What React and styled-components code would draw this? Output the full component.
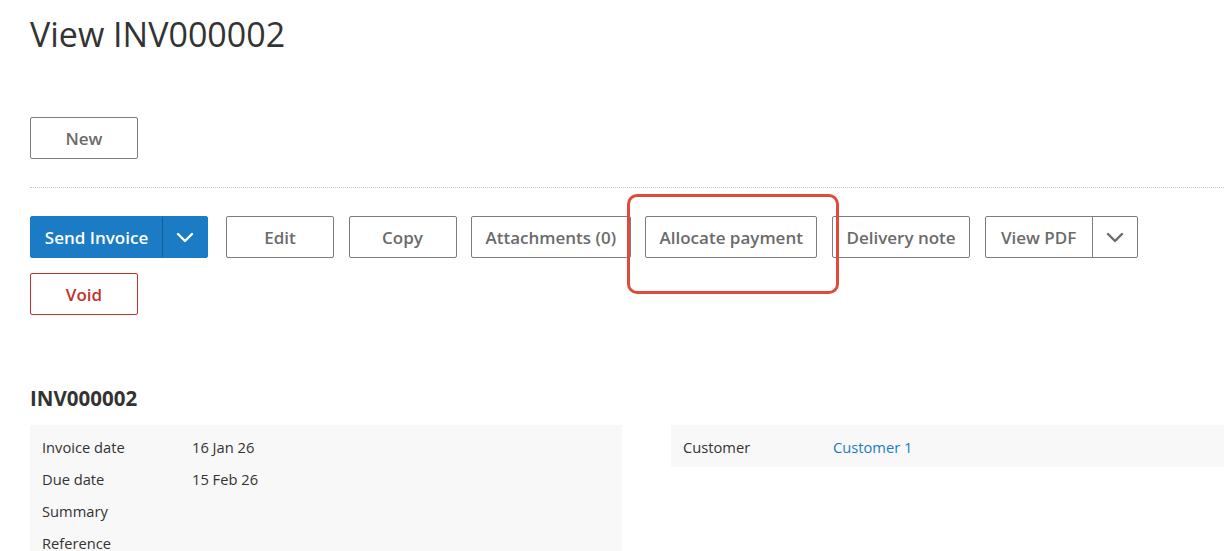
import React from "react";
import styled, { createGlobalStyle } from "styled-components";

const GlobalStyle = createGlobalStyle`
  html, body {
    margin: 0;
    padding: 0;
    background: #fff;
    overflow: hidden;
  }
  body {
    font-family: "Open Sans", "Liberation Sans", sans-serif;
    color: #333;
  }
`;

const Page = styled.div`
  position: relative;
  width: 1260px;
  padding: 14px 0 0 30px;
`;

const Title = styled.h1`
  margin: 0;
  font-size: 34px;
  line-height: 41px;
  font-weight: 400;
  color: #333;
`;

const TopBar = styled.div`
  margin-top: 62px;
  padding-bottom: 28px;
  border-bottom: 1px dotted #c8c8c8;
`;

const Actions = styled.div`
  display: flex;
  flex-wrap: wrap;
  row-gap: 15px;
  column-gap: 14.5px;
  padding-top: 28px;
  width: 1120px;
`;

const Button = styled.button`
  box-sizing: border-box;
  height: 42px;
  min-width: 108px;
  padding: 0 13.5px;
  font-family: "Open Sans", "Liberation Sans", sans-serif;
  font-size: 17px;
  font-weight: 600;
  color: ${(p) => (p.$danger ? "#c4312c" : "#6b6b6b")};
  background: #fff;
  border: 1px solid ${(p) => (p.$danger ? "#c4312c" : "#7d7d7d")};
  border-radius: 2px;
  cursor: pointer;
`;

const Split = styled.div`
  display: flex;
  height: 42px;
  margin-right: ${(p) => (p.$extra ? "3.5px" : "0")};
  border-radius: 2px;
  border: 1px solid ${(p) => (p.$primary ? "#1b7bc4" : "#7d7d7d")};
  background: ${(p) => (p.$primary ? "#1b7bc4" : "#fff")};
  box-sizing: border-box;
`;

const SplitMain = styled.button`
  height: 100%;
  width: ${(p) => p.$w}px;
  padding: 0;
  font-family: "Open Sans", "Liberation Sans", sans-serif;
  font-size: 17px;
  font-weight: 600;
  color: ${(p) => (p.$primary ? "#fff" : "#6b6b6b")};
  background: transparent;
  border: none;
  border-right: 1px solid ${(p) => (p.$primary ? "#175f99" : "#7d7d7d")};
  cursor: pointer;
`;

const SplitToggle = styled.button`
  height: 100%;
  width: 44px;
  padding: 0;
  display: flex;
  align-items: center;
  justify-content: center;
  background: transparent;
  border: none;
  color: ${(p) => (p.$primary ? "#fff" : "#6b6b6b")};
  cursor: pointer;
`;

const Highlight = styled.div`
  position: absolute;
  left: 627px;
  top: 194px;
  width: 212px;
  height: 100px;
  box-sizing: border-box;
  border: 3px solid #e04a3a;
  border-radius: 10px;
  pointer-events: none;
`;

const Heading = styled.h2`
  margin: 68px 0 0;
  font-size: 20.5px;
  line-height: 30px;
  font-weight: 700;
  color: #333;
`;

const Columns = styled.div`
  display: grid;
  grid-template-columns: 592px 592px;
  column-gap: 49px;
  align-items: start;
  margin-top: 12px;
`;

const Panel = styled.div`
  background: #f8f8f8;
  padding: 6px 12px 4px;
  min-height: ${(p) => p.$minH || 0}px;
`;

const Row = styled.div`
  display: grid;
  grid-template-columns: 150px 1fr;
  height: 32px;
  align-items: center;
  font-size: 14.7px;
  color: #333;
`;

const Link = styled.a`
  color: #1b7bc4;
  text-decoration: none;
`;

const Chevron = () => (
  <svg width="18" height="11" viewBox="0 0 18 11" fill="none">
    <polyline
      points="2,2 9,9 16,2"
      stroke="currentColor"
      strokeWidth="2.4"
      strokeLinecap="round"
      strokeLinejoin="round"
    />
  </svg>
);

export default function App() {
  return (
    <>
      <GlobalStyle />
      <Page>
        <Title>View INV000002</Title>
        <TopBar>
          <Button>New</Button>
        </TopBar>
        <Actions>
          <Split $primary $extra>
            <SplitMain $primary $w={132}>
              Send Invoice
            </SplitMain>
            <SplitToggle $primary>
              <Chevron />
            </SplitToggle>
          </Split>
          <Button>Edit</Button>
          <Button>Copy</Button>
          <Button>Attachments (0)</Button>
          <Button>Allocate payment</Button>
          <Button>Delivery note</Button>
          <Split>
            <SplitMain $w={107}>View PDF</SplitMain>
            <SplitToggle>
              <Chevron />
            </SplitToggle>
          </Split>
          <Button $danger>Void</Button>
        </Actions>
        <Highlight />
        <Heading>INV000002</Heading>
        <Columns>
          <Panel $minH={160}>
            <Row>
              <span>Invoice date</span>
              <span>16 Jan 26</span>
            </Row>
            <Row>
              <span>Due date</span>
              <span>15 Feb 26</span>
            </Row>
            <Row>
              <span>Summary</span>
              <span></span>
            </Row>
            <Row>
              <span>Reference</span>
              <span></span>
            </Row>
          </Panel>
          <Panel>
            <Row>
              <span>Customer</span>
              <Link href="#">Customer 1</Link>
            </Row>
          </Panel>
        </Columns>
      </Page>
    </>
  );
}
